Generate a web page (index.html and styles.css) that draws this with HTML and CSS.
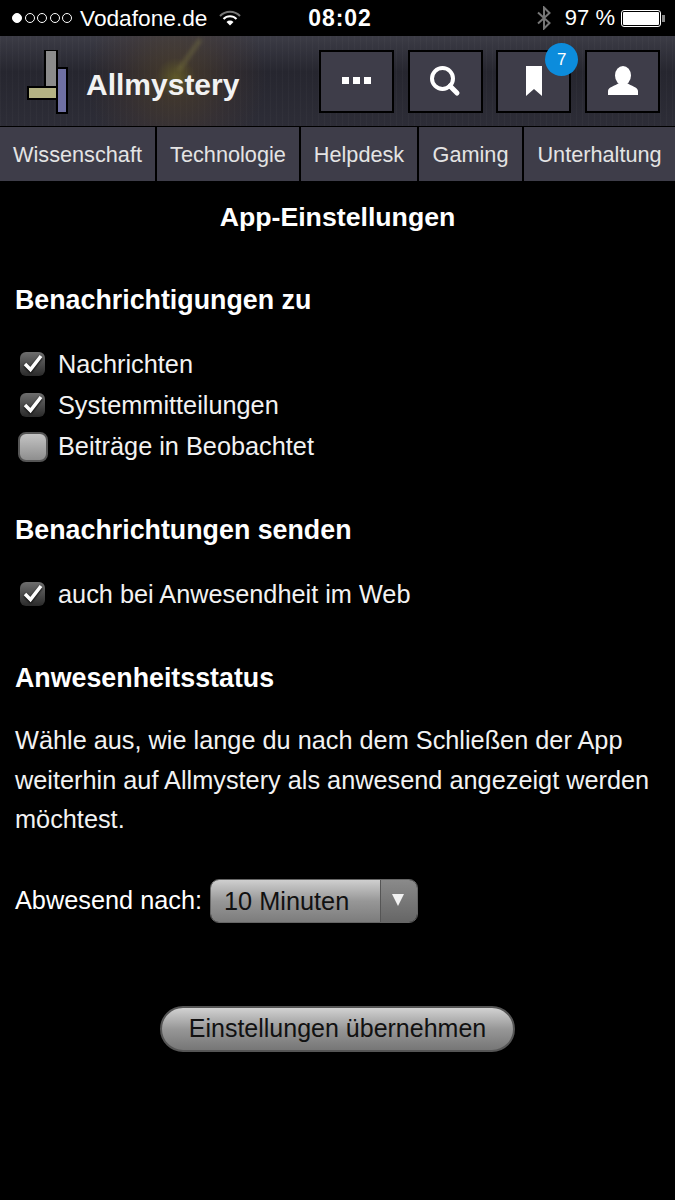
FILE: index.html
```html
<!DOCTYPE html>
<html lang="de">
<head>
    <meta charset="UTF-8">
    <meta name="viewport" content="width=device-width, initial-scale=1.0">
    <title>App-Einstellungen</title>
    <link rel="stylesheet" href="styles.css">
</head>
<body>
    <div class="status-bar">
        <div class="status-left">
            <span class="signal">
                <i class="dot full"></i><i class="dot"></i><i class="dot"></i><i class="dot"></i><i class="dot"></i>
            </span>
            <span class="carrier">Vodafone.de</span>
            <svg class="wifi" width="22" height="16" viewBox="0 0 22 16">
                <path d="M1 6 A14 14 0 0 1 21 6" fill="none" stroke="#777" stroke-width="2"/>
                <path d="M4.5 9 A9 9 0 0 1 17.5 9" fill="none" stroke="#fff" stroke-width="2"/>
                <path d="M7.5 12 A5 5 0 0 1 14.5 12 L11 15.5 Z" fill="#fff"/>
            </svg>
        </div>
        <div class="status-time">08:02</div>
        <div class="status-right">
            <svg class="bluetooth" width="16" height="24" viewBox="0 0 16 24">
                <path d="M2 6.5 L13.5 17 L8 22.5 V1.5 L13.5 7 L2 17.5" fill="none" stroke="#777" stroke-width="2"/>
            </svg>
            <span class="battery-text">97 %</span>
            <span class="battery"><span class="battery-fill"></span></span>
            <span class="battery-tip"></span>
        </div>
    </div>

    <header class="site-header">
        <div class="brand">
            <svg class="logo" width="42" height="64" viewBox="0 0 42 64">
                <rect x="18" y="0" width="12" height="37" fill="#8b8b8b" stroke="#000" stroke-width="2"/>
                <rect x="30" y="18" width="10" height="45" fill="#6f70a3" stroke="#000" stroke-width="2"/>
                <rect x="1" y="37" width="29" height="12" fill="#b5b384" stroke="#000" stroke-width="2"/>
            </svg>
            <span class="brand-name">Allmystery</span>
        </div>
        <div class="header-buttons">
            <a class="icon-btn">
                <svg width="32" height="10" viewBox="0 0 32 10" fill="#fff">
                    <rect x="1" y="1" width="7" height="7"/><rect x="12" y="1" width="7" height="7"/><rect x="23" y="1" width="7" height="7"/>
                </svg>
            </a>
            <a class="icon-btn">
                <svg width="32" height="32" viewBox="0 0 32 32">
                    <circle cx="13.5" cy="13.5" r="10.5" fill="none" stroke="#fff" stroke-width="4"/>
                    <path d="M21 21 L28 28" stroke="#fff" stroke-width="5" stroke-linecap="round"/>
                </svg>
            </a>
            <a class="icon-btn bookmark-btn">
                <svg width="16" height="30" viewBox="0 0 16 30" fill="#fff">
                    <path d="M0 0 H16 V30 L8 23 L0 30 Z"/>
                </svg>
                <span class="badge">7</span>
            </a>
            <a class="icon-btn">
                <svg width="30" height="30" viewBox="0 0 30 30" fill="#fff">
                    <ellipse cx="15" cy="9.5" rx="8" ry="9.5"/>
                    <path d="M0 29 V25 C0 21 7 20 11 17 H19 C23 20 30 21 30 25 V29 Z"/>
                </svg>
            </a>
        </div>
    </header>

    <nav class="main-nav">
        <a class="nav-wissenschaft">Wissenschaft</a>
        <a class="nav-technologie">Technologie</a>
        <a class="nav-helpdesk">Helpdesk</a>
        <a class="nav-gaming">Gaming</a>
        <a class="nav-unterhaltung">Unterhaltung</a>
    </nav>

    <main class="content">
        <h1>App-Einstellungen</h1>

        <h2 class="first-section">Benachrichtigungen zu</h2>
        <ul class="options">
            <li><span class="check on"><svg width="24" height="22" viewBox="0 0 24 22"><path d="M4 12 L9.5 17.5 L20 4" fill="none" stroke="#fff" stroke-width="3.5"/></svg></span>Nachrichten</li>
            <li><span class="check on"><svg width="24" height="22" viewBox="0 0 24 22"><path d="M4 12 L9.5 17.5 L20 4" fill="none" stroke="#fff" stroke-width="3.5"/></svg></span>Systemmitteilungen</li>
            <li><span class="check"></span>Beiträge in Beobachtet</li>
        </ul>

        <h2>Benachrichtungen senden</h2>
        <ul class="options">
            <li><span class="check on"><svg width="24" height="22" viewBox="0 0 24 22"><path d="M4 12 L9.5 17.5 L20 4" fill="none" stroke="#fff" stroke-width="3.5"/></svg></span>auch bei Anwesendheit im Web</li>
        </ul>

        <h2>Anwesenheitsstatus</h2>
        <p class="intro">Wähle aus, wie lange du nach dem Schließen der App weiterhin auf Allmystery als anwesend angezeigt werden möchtest.</p>

        <div class="away-row">
            <span>Abwesend nach:</span>
            <div class="select">
                <span class="select-value">10 Minuten</span>
                <span class="select-arrow"></span>
            </div>
        </div>

        <div class="actions">
            <button type="button" class="save-btn">Einstellungen übernehmen</button>
        </div>
    </main>
</body>
</html>
```

FILE: styles.css
```css
* {
    box-sizing: border-box;
    margin: 0;
    padding: 0;
}

body {
    font-family: 'Liberation Sans', Arial, sans-serif;
    background-color: #000;
    color: #fff;
    width: 675px;
    height: 1200px;
    overflow: hidden;
}

.status-bar {
    height: 36px;
    display: grid;
    grid-template-columns: 1fr auto 1fr;
    align-items: center;
    padding: 0 10px 0 12px;
    font-size: 22.7px;
}

.status-left,
.status-right {
    display: flex;
    align-items: center;
}

.status-right {
    justify-content: flex-end;
}

.signal {
    display: flex;
    gap: 2.5px;
    margin-right: 8px;
}

.dot {
    width: 10px;
    height: 10px;
    border: 1px solid #fff;
    border-radius: 50%;
}

.dot.full {
    background-color: #fff;
}

.wifi {
    margin-left: 12px;
}

.status-time {
    font-weight: bold;
    font-size: 23px;
    letter-spacing: 0.9px;
    margin-left: 3px;
}

.bluetooth {
    margin-right: 13px;
}

.battery-text {
    margin-right: 6px;
    font-size: 22px;
}

.battery {
    width: 40px;
    height: 17px;
    border: 1px solid #fff;
    border-radius: 3px;
    padding: 1px;
    display: flex;
}

.battery-fill {
    flex: 1;
    background-color: #fff;
    border-radius: 1px;
}

.battery-tip {
    width: 3px;
    height: 7px;
    margin-left: 1px;
    background-color: #888;
}

.site-header {
    height: 90px;
    position: relative;
    display: flex;
    justify-content: space-between;
    align-items: center;
    padding: 0 15px 0 27px;
    background-color: #2b2b35;
    background-image:
        radial-gradient(circle at 176px 42px, rgba(125, 115, 35, 0.65), rgba(90, 70, 40, 0.45) 20px, rgba(75, 58, 48, 0.3) 55px, transparent 90px),
        repeating-linear-gradient(90deg, rgba(255, 255, 255, 0.025) 0 1px, transparent 1px 6px),
        linear-gradient(180deg, #3c3c46, #26262f 40%, #2d2d37);
}

/* streak running out of the glow behind the logo text */
.site-header::before {
    content: "";
    position: absolute;
    left: 188px;
    top: 0;
    width: 3px;
    height: 38px;
    background-color: rgba(140, 135, 70, 0.5);
    filter: blur(2px);
    transform: rotate(35deg);
}

.brand {
    display: flex;
    align-items: center;
}

.logo {
    margin-top: 2px;
}

.brand-name {
    font-size: 30px;
    font-weight: bold;
    margin: 8px 0 0 17px;
    color: #f2f2f2;
}

.header-buttons {
    display: flex;
    gap: 13.67px;
}

.icon-btn {
    width: 75px;
    height: 63px;
    position: relative;
    display: flex;
    align-items: center;
    justify-content: center;
    background-color: #3e3d49;
    border: 2px solid #000;
}

.badge {
    position: absolute;
    top: -9px;
    right: -9px;
    width: 33px;
    height: 33px;
    border-radius: 50%;
    background-color: #0c8cdc;
    color: #fff;
    font-size: 17px;
    line-height: 33px;
    text-align: center;
}

.main-nav {
    height: 56px;
    display: flex;
    gap: 2px;
    border-top: 2px solid #000;
    margin-top: -1px;
}

.main-nav a {
    display: flex;
    align-items: center;
    justify-content: center;
    height: 54px;
    padding-top: 2px;
    background-color: #3e3d49;
    color: #e4e4e4;
    font-size: 21.7px;
}

.nav-wissenschaft { width: 155px; }
.nav-technologie { width: 142px; }
.nav-helpdesk { width: 116px; }
.nav-gaming { width: 103px; }
.nav-unterhaltung { width: 151px; }

.content {
    padding: 0 15px;
    font-size: 25.3px;
}

h1 {
    font-size: 26.7px;
    text-align: center;
    margin-top: 21px;
    line-height: 30px;
}

h2 {
    font-size: 26.8px;
    line-height: 30px;
    margin-top: 48px;
}

h2.first-section {
    margin-top: 53px;
}

.options {
    list-style: none;
    margin-top: 28.5px;
}

.options li {
    display: flex;
    align-items: center;
    height: 41.25px;
    color: #f2f2f2;
}

.check {
    width: 30px;
    height: 30px;
    flex: none;
    margin: 0 10px 0 3px;
    border: 2px solid #555;
    border-radius: 8px;
    background: linear-gradient(180deg, #c4c4c4, #8e8e8e);
}

.check.on {
    width: 25px;
    height: 24px;
    margin: 0 13px 0 5px;
    border: 0;
    border-radius: 6px;
    background: linear-gradient(180deg, #6e6e6e, #2a2a2a);
    display: flex;
    align-items: center;
    justify-content: center;
}

.check.on svg {
    flex: none;
    margin-top: -3px;
    filter: drop-shadow(0 1px 1px #000);
}

.intro {
    margin-top: 28px;
    line-height: 39.5px;
    color: #f2f2f2;
}

.away-row {
    display: flex;
    align-items: center;
    gap: 8px;
    margin-top: 39px;
}

.select {
    width: 208px;
    height: 44px;
    display: flex;
    border: 1px solid #666;
    border-radius: 9px;
    overflow: hidden;
    color: #111;
}

.select-value {
    flex: 1;
    padding-left: 13px;
    line-height: 42px;
    background: linear-gradient(180deg, #cfcfcf, #979797 50%, #7c7c7c);
}

.select-arrow {
    width: 37px;
    border-left: 1px solid #555;
    background-image: linear-gradient(180deg, #8a8a8a, #666);
    position: relative;
}

.select-arrow::after {
    content: "";
    position: absolute;
    top: 14px;
    left: 11px;
    border-left: 6px solid transparent;
    border-right: 6px solid transparent;
    border-top: 12px solid #f2f2f2;
}

.actions {
    display: flex;
    justify-content: center;
    margin-top: 83px;
}

.save-btn {
    width: 355px;
    height: 46px;
    border: 2px solid #555;
    border-radius: 23px;
    background: linear-gradient(180deg, #d2d2d2, #979797 50%, #767676);
    color: #111;
    font-family: inherit;
    font-size: 25px;
}
```
